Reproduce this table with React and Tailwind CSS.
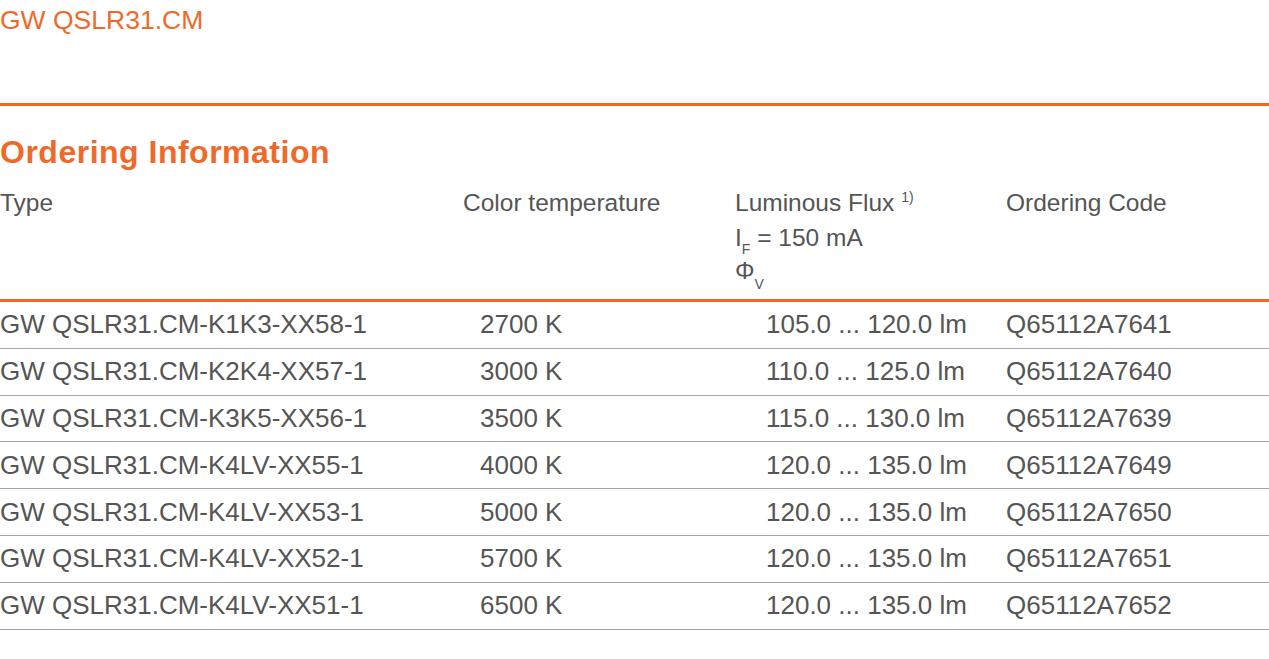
const rows = [
  ["GW QSLR31.CM-K1K3-XX58-1", "2700 K", "105.0 ... 120.0 lm", "Q65112A7641"],
  ["GW QSLR31.CM-K2K4-XX57-1", "3000 K", "110.0 ... 125.0 lm", "Q65112A7640"],
  ["GW QSLR31.CM-K3K5-XX56-1", "3500 K", "115.0 ... 130.0 lm", "Q65112A7639"],
  ["GW QSLR31.CM-K4LV-XX55-1", "4000 K", "120.0 ... 135.0 lm", "Q65112A7649"],
  ["GW QSLR31.CM-K4LV-XX53-1", "5000 K", "120.0 ... 135.0 lm", "Q65112A7650"],
  ["GW QSLR31.CM-K4LV-XX52-1", "5700 K", "120.0 ... 135.0 lm", "Q65112A7651"],
  ["GW QSLR31.CM-K4LV-XX51-1", "6500 K", "120.0 ... 135.0 lm", "Q65112A7652"],
]

export default function App() {
  return (
    <div className="min-h-[659px] w-[1269px] bg-white font-['Liberation_Sans',Arial,sans-serif] text-[#555555]">
      <div className="h-[103px] pt-[5px] text-[26.5px] leading-[30px] text-[#ef6a2a]">
        GW QSLR31.CM
      </div>
      <div className="h-[3px] bg-[#ef6a2a]" />

      <h1 className="mt-[26px] text-[32px] font-bold leading-[40px] tracking-[0.5px] text-[#ef6a2a]">
        Ordering Information
      </h1>

      <div className="grid h-[127px] grid-cols-[463px_272px_271px_1fr] pt-[13px] text-[24.5px] leading-[35px]">
        <div>Type</div>
        <div>Color temperature</div>
        <div>
          <div>
            Luminous Flux <span className="align-[9px] text-[14px] leading-none">1)</span>
          </div>
          <div>
            I<span className="align-[-8px] text-[14px] leading-none">F</span> = 150 mA
          </div>
          <div className="-mt-[3px]">
            Φ<span className="align-[-10px] text-[14px] leading-none">V</span>
          </div>
        </div>
        <div>Ordering Code</div>
      </div>
      <div className="h-[3px] bg-[#ef6a2a]" />

      <div className="text-[26px]">
        {rows.map((row) => (
          <div
            key={row[0]}
            className="grid h-[46.8px] grid-cols-[480px_286px_240px_1fr] items-center border-b border-[#a6a6a6]"
          >
            <div>{row[0]}</div>
            <div>{row[1]}</div>
            <div>{row[2]}</div>
            <div>{row[3]}</div>
          </div>
        ))}
      </div>
    </div>
  )
}
